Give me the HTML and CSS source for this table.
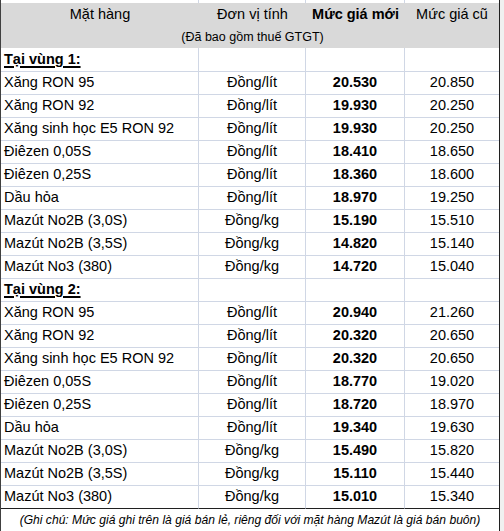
FILE: index.html
```html
<!DOCTYPE html>
<html lang="vi">
<head>
<meta charset="utf-8">
<title>Bảng giá xăng dầu</title>
<link rel="stylesheet" href="styles.css">
</head>
<body>
<div class="page">
  <div class="sheet">
    <div class="row strip"><div class="c c1"></div><div class="c c2"></div><div class="c c3"></div><div class="c c4"></div></div>
    <div class="head">
      <div class="hrow">
        <div class="h h1">Mặt hàng</div>
        <div class="h h2">Đơn vị tính</div>
        <div class="h h3 b">Mức giá mới</div>
        <div class="h h4">Mức giá cũ</div>
      </div>
      <div class="hrow hsub">
        <div class="h h1"></div>
        <div class="h h2 sub">(Đã bao gồm thuế GTGT)</div>
        <div class="h h3"></div>
        <div class="h h4"></div>
      </div>
    </div>

    <div class="row"><div class="c c1 zone">Tại vùng 1:</div><div class="c c2"></div><div class="c c3"></div><div class="c c4"></div></div>
    <div class="row"><div class="c c1">Xăng RON 95</div><div class="c c2">Đồng/lít</div><div class="c c3">20.530</div><div class="c c4">20.850</div></div>
    <div class="row"><div class="c c1">Xăng RON 92</div><div class="c c2">Đồng/lít</div><div class="c c3">19.930</div><div class="c c4">20.250</div></div>
    <div class="row"><div class="c c1">Xăng sinh học E5 RON 92</div><div class="c c2">Đồng/lít</div><div class="c c3">19.930</div><div class="c c4">20.250</div></div>
    <div class="row"><div class="c c1">Điêzen 0,05S</div><div class="c c2">Đồng/lít</div><div class="c c3">18.410</div><div class="c c4">18.650</div></div>
    <div class="row"><div class="c c1">Điêzen 0,25S</div><div class="c c2">Đồng/lít</div><div class="c c3">18.360</div><div class="c c4">18.600</div></div>
    <div class="row"><div class="c c1">Dầu hỏa</div><div class="c c2">Đồng/lít</div><div class="c c3">18.970</div><div class="c c4">19.250</div></div>
    <div class="row"><div class="c c1">Mazút No2B (3,0S)</div><div class="c c2">Đồng/kg</div><div class="c c3">15.190</div><div class="c c4">15.510</div></div>
    <div class="row"><div class="c c1">Mazút No2B (3,5S)</div><div class="c c2">Đồng/kg</div><div class="c c3">14.820</div><div class="c c4">15.140</div></div>
    <div class="row"><div class="c c1">Mazút No3 (380)</div><div class="c c2">Đồng/kg</div><div class="c c3">14.720</div><div class="c c4">15.040</div></div>

    <div class="row"><div class="c c1 zone">Tại vùng 2:</div><div class="c c2"></div><div class="c c3"></div><div class="c c4"></div></div>
    <div class="row"><div class="c c1">Xăng RON 95</div><div class="c c2">Đồng/lít</div><div class="c c3">20.940</div><div class="c c4">21.260</div></div>
    <div class="row"><div class="c c1">Xăng RON 92</div><div class="c c2">Đồng/lít</div><div class="c c3">20.320</div><div class="c c4">20.650</div></div>
    <div class="row"><div class="c c1">Xăng sinh học E5 RON 92</div><div class="c c2">Đồng/lít</div><div class="c c3">20.320</div><div class="c c4">20.650</div></div>
    <div class="row"><div class="c c1">Điêzen 0,05S</div><div class="c c2">Đồng/lít</div><div class="c c3">18.770</div><div class="c c4">19.020</div></div>
    <div class="row"><div class="c c1">Điêzen 0,25S</div><div class="c c2">Đồng/lít</div><div class="c c3">18.720</div><div class="c c4">18.970</div></div>
    <div class="row"><div class="c c1">Dầu hỏa</div><div class="c c2">Đồng/lít</div><div class="c c3">19.340</div><div class="c c4">19.630</div></div>
    <div class="row"><div class="c c1">Mazút No2B (3,0S)</div><div class="c c2">Đồng/kg</div><div class="c c3">15.490</div><div class="c c4">15.820</div></div>
    <div class="row"><div class="c c1">Mazút No2B (3,5S)</div><div class="c c2">Đồng/kg</div><div class="c c3">15.110</div><div class="c c4">15.440</div></div>
    <div class="row last"><div class="c c1">Mazút No3 (380)</div><div class="c c2">Đồng/kg</div><div class="c c3">15.010</div><div class="c c4">15.340</div></div>

    <div class="note">(Ghi chú: Mức giá ghi trên là giá bán lẻ, riêng đối với mặt hàng Mazút là giá bán buôn)</div>
  </div>
</div>
</body>
</html>
```

FILE: styles.css
```css
* { box-sizing: border-box; }
html, body { margin: 0; padding: 0; }
body {
  background: #f0f0f0;
  font-family: "Liberation Sans", Arial, sans-serif;
  color: #000;
}
.page {
  width: 504px;
  height: 531px;
  overflow: hidden;
}
.sheet {
  width: 500px;
  background: #fff;
  border-left: 1px solid #404040;
  border-right: 1px solid #202020;
}
.row {
  display: grid;
  grid-template-columns: 198px 107px 99px 94px;
  height: 23px;
}
.strip { height: 3px; }
.strip .c { border-bottom: none; }
.c {
  border-right: 1px solid #d0d7e5;
  border-bottom: 1px solid #d0d7e5;
  font-size: 14.5px;
  line-height: 23px;
  white-space: nowrap;
  overflow: visible;
}
.c4 { border-right: none; }
.c1 { padding-left: 3px; }
.c2, .c3, .c4 { text-align: center; }
.c3 { font-weight: bold; }
.zone { font-weight: bold; text-decoration: underline; text-decoration-thickness: 1.5px; text-underline-offset: 2px; }
.last .c { border-bottom: 1px solid #202020; }

.head { background: #d9d9d9; }
.hrow {
  display: grid;
  grid-template-columns: 198px 107px 99px 94px;
  height: 23px;
}
.hsub { height: 22px; }
.h {
  font-size: 14.5px;
  line-height: 23px;
  text-align: center;
  white-space: nowrap;
}
.b { font-weight: bold; }
.sub {
  font-size: 12.5px;
  line-height: 22px;
  display: flex;
  justify-content: center;
  overflow: visible;
}

.note {
  height: 23px;
  line-height: 25px;
  text-align: center;
  font-style: italic;
  font-size: 12.1px;
  white-space: nowrap;
}
```
